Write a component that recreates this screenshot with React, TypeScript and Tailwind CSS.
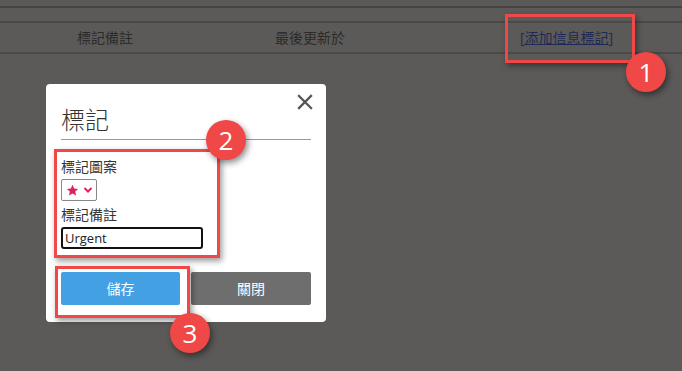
import { useState } from "react";

const font = { fontFamily: '"Open Sans", "Noto Sans CJK TC", sans-serif' };

function Badge({ n, className }: { n: number; className: string }) {
  return (
    <div
      className={`absolute flex h-10 w-10 items-center justify-center rounded-full bg-[#f04747] text-[26px] leading-none text-white shadow-[2px_3px_6px_rgba(0,0,0,0.45)] ${className}`}
    >
      {n}
    </div>
  );
}

function Box({ className }: { className: string }) {
  return (
    <div
      className={`pointer-events-none absolute border-[3px] border-[#f04747] shadow-[2px_3px_6px_rgba(0,0,0,0.4)] ${className}`}
    />
  );
}

function App() {
  const [note, setNote] = useState("Urgent");

  return (
    <div className="relative h-[371px] w-[682px] overflow-hidden bg-[#5b5a58]" style={font}>
      {/* background table, dimmed */}
      <div className="flex flex-col">
        <div className="h-2 border-b-2 border-[#454442]" />
        <div className="h-[15px] border-b-2 border-[#4a4947]" />
        <div className="flex h-[31px] items-center border-b-2 border-[#4a4947] text-[14px] text-[#2c2b2a]">
          <div className="w-[210px] text-center">標記備註</div>
          <div className="w-[200px] text-center">最後更新於</div>
          <div className="flex-1 pl-[110px]">
            <span className="text-[#1e2a55]">
              [<span className="underline">添加信息標記</span>]
            </span>
          </div>
        </div>
      </div>

      {/* modal */}
      <div className="absolute left-[46px] top-[84px] flex h-[238px] w-[280px] flex-col rounded-[4px] bg-white px-[15px] pt-[20px]">
        <div className="flex items-start justify-between border-b border-[#999] pb-[3px]">
          <h2 className="text-[24px] font-light leading-[32px] text-[#333]">標記</h2>
          <button className="-mt-[11px] mr-[-3px] text-[#555]">
            <svg width="18" height="18" viewBox="0 0 18 18">
              <path d="M3 3L15 15M15 3L3 15" stroke="currentColor" strokeWidth="2.3" strokeLinecap="square" />
            </svg>
          </button>
        </div>

        <div className="flex flex-col pt-[17px] text-[14px] text-[#333]">
          <label className="leading-[20px]">標記圖案</label>
          <div className="mt-[2px] flex h-[22px] w-[36px] items-center justify-center gap-[4px] rounded-[2px] border border-[#888]">
            <svg width="13" height="13" viewBox="0 0 24 24">
              <path
                d="M12 1.5l3.1 7 7.4.6-5.6 4.9 1.7 7.4L12 17.5l-6.6 3.9 1.7-7.4L1.5 9.1l7.4-.6z"
                fill="#e01f5e"
              />
            </svg>
            <svg width="10" height="10" viewBox="0 0 10 10">
              <path d="M1.5 3l3.5 3.5L8.5 3" stroke="#e01f5e" strokeWidth="2" fill="none" />
            </svg>
          </div>
          <label className="mt-[4px] leading-[20px]">標記備註</label>
          <input
            value={note}
            onChange={(e) => setNote(e.target.value)}
            className="mt-[2px] h-[22px] w-[142px] rounded-[3px] border-2 border-[#111] px-[2px] text-[13px] leading-none text-[#222] outline-none"
          />
        </div>

        <div className="mt-[23px] flex gap-[11px]">
          <button className="h-[33px] w-[119px] rounded-[2px] bg-[#42a0e3] text-[14px] text-white">儲存</button>
          <button className="h-[33px] w-[120px] rounded-[2px] bg-[#6e6e6e] text-[14px] text-white">關閉</button>
        </div>
      </div>

      {/* annotations */}
      <Box className="left-[505px] top-[14px] h-[49px] w-[130px]" />
      <Badge n={1} className="left-[626px] top-[52px]" />
      <Box className="left-[54px] top-[149px] h-[109px] w-[166px]" />
      <Badge n={2} className="left-[206px] top-[120px]" />
      <Box className="left-[55px] top-[266px] h-[52px] w-[135px]" />
      <Badge n={3} className="left-[170px] top-[313px]" />
    </div>
  );
}

export default App;
